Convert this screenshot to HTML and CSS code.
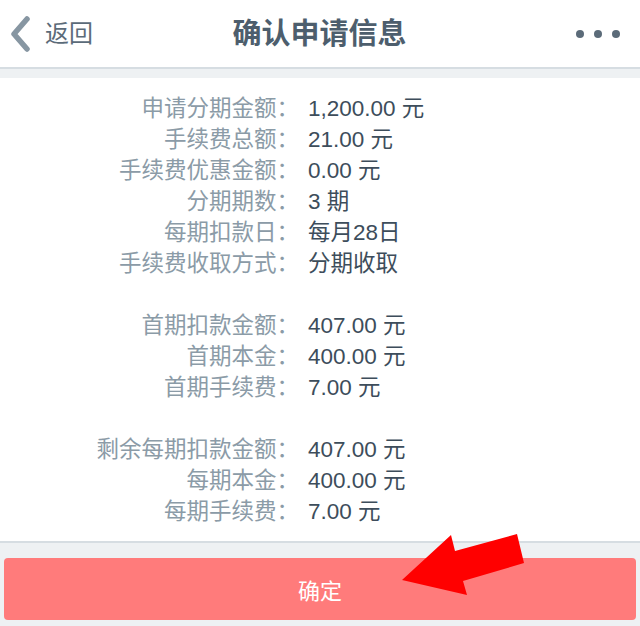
FILE: index.html
```html
<!DOCTYPE html>
<html lang="zh-CN">
<head>
<meta charset="utf-8">
<title>确认申请信息</title>
<link rel="stylesheet" href="styles.css">
</head>
<body>
<div class="page">
  <header class="navbar">
    <div class="back">
      <svg class="chev" width="22" height="36" viewBox="0 0 22 36"><polyline points="17,3 4,18 17,33" fill="none" stroke="#8796a2" stroke-width="5.5" stroke-linecap="round" stroke-linejoin="round"/></svg>
      <span class="back-text">返回</span>
    </div>
    <h1 class="title">确认申请信息</h1>
    <div class="more"><span class="dot"></span><span class="dot"></span><span class="dot"></span></div>
  </header>
  <div class="strip"></div>
  <main class="content">
    <div class="grid">
      <div class="label">申请分期金额：</div><div class="value">1,200.00 元</div>
      <div class="label">手续费总额：</div><div class="value">21.00 元</div>
      <div class="label">手续费优惠金额：</div><div class="value">0.00 元</div>
      <div class="label">分期期数：</div><div class="value">3 期</div>
      <div class="label">每期扣款日：</div><div class="value">每月28日</div>
      <div class="label">手续费收取方式：</div><div class="value">分期收取</div>
      <div class="spacer"></div>
      <div class="label">首期扣款金额：</div><div class="value">407.00 元</div>
      <div class="label">首期本金：</div><div class="value">400.00 元</div>
      <div class="label">首期手续费：</div><div class="value">7.00 元</div>
      <div class="spacer"></div>
      <div class="label">剩余每期扣款金额：</div><div class="value">407.00 元</div>
      <div class="label">每期本金：</div><div class="value">400.00 元</div>
      <div class="label">每期手续费：</div><div class="value">7.00 元</div>
    </div>
  </main>
  <footer class="footer">
    <button class="confirm">确定</button>
  </footer>
  <svg class="arrow" width="640" height="626" viewBox="0 0 640 626"><polygon points="402,580 451,535 455,551 517,534 524,563 463,581 467,595" fill="#ff0000"/></svg>
</div>
</body>
</html>
```

FILE: styles.css
```css
* { box-sizing: border-box; }
html, body { margin: 0; padding: 0; }
body {
  background: #ffffff;
  font-family: "Liberation Sans", "Noto Sans CJK SC", sans-serif;
}
.page {
  position: relative;
  width: 640px;
  height: 626px;
  display: flex;
  flex-direction: column;
  overflow: hidden;
}
.navbar {
  height: 69px;
  display: grid;
  grid-template-columns: 1fr auto 1fr;
  align-items: center;
  padding: 0 20px 0 10px;
  border-bottom: 2px solid #d6dde2;
  background: #ffffff;
}
.back {
  display: flex;
  align-items: center;
}
.chev { display: block; margin-right: 12px; }
.back-text {
  font-size: 24px;
  color: #5b6b79;
  line-height: 30px;
  margin-left: 1px;
}
.title {
  margin: 0 0 0 9px;
  font-size: 29px;
  font-weight: 700;
  color: #4d5e6d;
  line-height: 34px;
  padding-top: 1px;
}
.more {
  display: flex;
  justify-content: flex-end;
  gap: 10px;
}
.dot {
  width: 8px;
  height: 8px;
  border-radius: 50%;
  background: #5b6b79;
}
.strip {
  height: 9px;
  background: #eef1f3;
}
.content {
  flex: 1;
  padding-top: 15px;
  background: #ffffff;
  border-bottom: 2px solid #d6dde2;
}
.grid {
  display: grid;
  grid-template-columns: 299px 1fr;
  column-gap: 9px;
  font-size: 22.5px;
  line-height: 31px;
}
.label {
  text-align: right;
  color: #8b9ba7;
  white-space: nowrap;
}
.value {
  color: #3d4d5b;
  white-space: nowrap;
}
.spacer {
  grid-column: 1 / -1;
  height: 31px;
}
.footer {
  height: 83px;
  background: #eef1f3;
  padding: 15px 4px 6px;
}
.confirm {
  width: 100%;
  height: 62px;
  border: none;
  border-radius: 4px;
  background: #ff7b7b;
  color: #ffffff;
  font-family: "Liberation Sans", "Noto Sans CJK SC", sans-serif;
  font-size: 22px;
}
.arrow {
  position: absolute;
  left: 0;
  top: 0;
  pointer-events: none;
}
```
